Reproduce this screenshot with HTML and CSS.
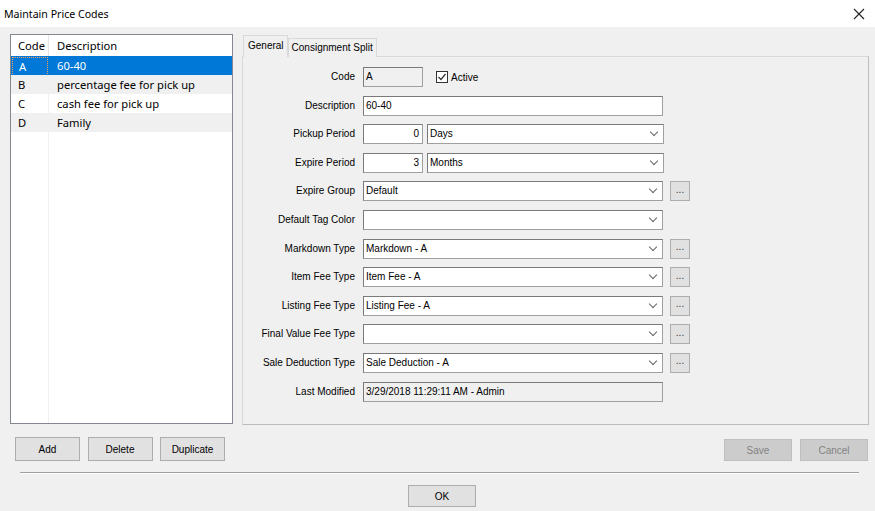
FILE: index.html
```html
<!DOCTYPE html>
<html lang="en">
<head>
  <meta charset="UTF-8" />
  <title>Maintain Price Codes</title>
  <link rel="stylesheet" href="styles.css">
</head>
<body>

<div class="window">
  <div class="titlebar">
    <span class="title">Maintain Price Codes</span>
    <svg class="close" width="12" height="12" viewBox="0 0 12 12">
      <path d="M1 1 L11 11 M11 1 L1 11" stroke="#222" stroke-width="1.1" fill="none" />
    </svg>
  </div>

  <div class="main">
    <div class="left">
      <div class="list">
        <div class="list-row head">
          <span class="c-code">Code</span>
          <span class="c-desc">Description</span>
        </div>
        <div class="list-row selected">
          <span class="c-code"><span class="focus">A</span></span>
          <span class="c-desc">60-40</span>
        </div>
        <div class="list-row alt">
          <span class="c-code">B</span>
          <span class="c-desc">percentage fee for pick up</span>
        </div>
        <div class="list-row">
          <span class="c-code">C</span>
          <span class="c-desc">cash fee for pick up</span>
        </div>
        <div class="list-row alt">
          <span class="c-code">D</span>
          <span class="c-desc">Family</span>
        </div>
        <div class="list-fill">
          <span class="c-code"></span>
          <span class="c-desc"></span>
        </div>
      </div>
      <div class="btn-row">
        <button class="btn">Add</button>
        <button class="btn">Delete</button>
        <button class="btn">Duplicate</button>
      </div>
    </div>

    <div class="right">
      <div class="tabs">
        <div class="tab active">General</div>
        <div class="tab">Consignment Split</div>
      </div>
      <div class="panel">
        <div class="form">
          <label>Code</label>
          <div class="line">
            <div class="field short readonly">A</div>
            <span class="check">
              <svg width="12" height="12" viewBox="0 0 12 12">
                <rect x="0.5" y="0.5" width="11" height="11" fill="#fff" stroke="#333" />
                <path d="M2.5 6 L5 8.5 L9.5 3" stroke="#333" stroke-width="1.2" fill="none" />
              </svg>
              Active
            </span>
          </div>

          <label>Description</label>
          <div class="line"><div class="field wide">60-40</div></div>

          <label>Pickup Period</label>
          <div class="line">
            <div class="field short num">0</div>
            <div class="field select mid">Days<i class="chev"></i></div>
          </div>

          <label>Expire Period</label>
          <div class="line">
            <div class="field short num">3</div>
            <div class="field select mid">Months<i class="chev"></i></div>
          </div>

          <label>Expire Group</label>
          <div class="line">
            <div class="field select wide">Default<i class="chev"></i></div>
            <button class="dots">...</button>
          </div>

          <label>Default Tag Color</label>
          <div class="line"><div class="field select wide"><i class="chev"></i></div></div>

          <label>Markdown Type</label>
          <div class="line">
            <div class="field select wide">Markdown - A<i class="chev"></i></div>
            <button class="dots">...</button>
          </div>

          <label>Item Fee Type</label>
          <div class="line">
            <div class="field select wide">Item Fee - A<i class="chev"></i></div>
            <button class="dots">...</button>
          </div>

          <label>Listing Fee Type</label>
          <div class="line">
            <div class="field select wide">Listing Fee - A<i class="chev"></i></div>
            <button class="dots">...</button>
          </div>

          <label>Final Value Fee Type</label>
          <div class="line">
            <div class="field select wide"><i class="chev"></i></div>
            <button class="dots">...</button>
          </div>

          <label>Sale Deduction Type</label>
          <div class="line">
            <div class="field select wide">Sale Deduction - A<i class="chev"></i></div>
            <button class="dots">...</button>
          </div>

          <label>Last Modified</label>
          <div class="line"><div class="field wide readonly">3/29/2018 11:29:11 AM - Admin</div></div>
        </div>
      </div>
      <div class="btn-row end">
        <button class="btn off">Save</button>
        <button class="btn off">Cancel</button>
      </div>
    </div>
  </div>

  <div class="sep"></div>

  <div class="footer">
    <button class="btn ok">OK</button>
  </div>
</div>

</body>
</html>
```

FILE: styles.css
```css
html, body {
  margin: 0;
  padding: 0;
  background: #f0f0f0;
  font-family: "Liberation Sans", Arial, sans-serif;
  font-size: 10px;
  color: #000;
  overflow: hidden;
}

.window {
  width: 875px;
  height: 511px;
  background: #f0f0f0;
}

.titlebar {
  height: 27px;
  background: #fff;
  display: flex;
  align-items: center;
  justify-content: space-between;
  padding: 0 8px 0 4px;
}

.title {
  font-family: "Noto Sans", "Open Sans", sans-serif;
  font-size: 10.6px;
}

.close {
  margin-right: 2px;
}

.main {
  display: flex;
  padding: 7px 0 0 10px;
}

.left {
  width: 223px;
  display: flex;
  flex-direction: column;
}

.list {
  height: 388px;
  border: 1px solid #828790;
  background: #fff;
  display: flex;
  flex-direction: column;
  font-family: "Noto Sans", "Open Sans", sans-serif;
  font-size: 11.2px;
}

.list-row {
  display: flex;
  height: 19px;
  line-height: 19px;
}

.list-row.head {
  height: 21px;
  line-height: 21px;
}

.list-row.alt {
  background: #f0f0f0;
}

.list-row.selected {
  background: #0078d7;
  color: #fff;
}

.list-fill {
  display: flex;
  flex: 1;
}

.c-code {
  width: 38px;
  padding-left: 7px;
  box-sizing: border-box;
  border-right: 1px solid #f0f0f0;
}

.c-desc {
  flex: 1;
  padding-left: 8px;
}

.list-row.head .c-code {
  border-right-color: #e5e5e5;
}

.list-row.selected .c-code {
  padding-left: 1px;
  border-right-color: #0078d7;
}

.focus {
  display: block;
  height: 17px;
  line-height: 17px;
  margin-top: 1px;
  padding-left: 6px;
  border: 1px dotted #f3a15a;
}

.btn-row {
  display: flex;
  gap: 7.5px;
  padding: 13px 0 0 5px;
}

.btn-row.end {
  justify-content: flex-end;
  gap: 8px;
  padding: 14px 1px 0 0;
}

.btn {
  width: 65px;
  height: 24px;
  background: #e1e1e1;
  border: 1px solid #adadad;
  font-family: "Liberation Sans", Arial, sans-serif;
  font-size: 10px;
  color: #000;
  padding: 0;
}

.btn.off {
  width: 68px;
  height: 22px;
  background: #cccccc;
  border-color: #bfbfbf;
  color: #838383;
}

.right {
  margin-left: 9px;
  width: 627px;
  display: flex;
  flex-direction: column;
}

.tabs {
  display: flex;
  height: 23px;
  align-items: flex-end;
  position: relative;
  z-index: 1;
}

.tab {
  height: 18px;
  line-height: 18px;
  padding: 0 3px;
  border: 1px solid #d9d9d9;
  border-bottom: none;
  background: #f0f0f0;
}

.tab.active {
  height: 21px;
  line-height: 20px;
  margin-left: 1px;
  padding: 0 3px 0 4px;
  border-color: #d9d9d9;
}

.panel {
  height: 367px;
  border: 1px solid #d9d9d9;
  border-right-color: #bcbcbc;
  border-bottom-color: #bcbcbc;
  margin-top: -1px;
}

.form {
  display: grid;
  grid-template-columns: 112px 1fr;
  column-gap: 8px;
  grid-auto-rows: 20px;
  row-gap: 8.6px;
  padding-top: 10px;
}

.form label {
  text-align: right;
  line-height: 20px;
}

.line {
  display: flex;
  align-items: center;
  gap: 4px;
}

.field {
  height: 20px;
  box-sizing: border-box;
  border: 1px solid #7a7a7a;
  border-right-color: #a0a0a0;
  border-bottom-color: #a0a0a0;
  background: #fff;
  line-height: 18px;
  padding: 0 3px 0 2px;
  position: relative;
  white-space: nowrap;
}

.field.readonly {
  background: #f0f0f0;
}

.field.short {
  width: 60px;
}

.field.num {
  text-align: right;
}

.field.mid {
  width: 237px;
}

.field.wide {
  width: 300px;
}

.chev {
  position: absolute;
  right: 6px;
  top: 4px;
  width: 5px;
  height: 5px;
  border-right: 1px solid #666;
  border-bottom: 1px solid #666;
  transform: rotate(45deg);
}

.check {
  display: flex;
  align-items: center;
  gap: 3px;
  margin-left: 9px;
}

.dots {
  width: 20px;
  height: 20px;
  margin-left: 3px;
  padding: 0 0 4px;
  background: #e1e1e1;
  border: 1px solid #adadad;
  font-family: "Liberation Sans", Arial, sans-serif;
  font-size: 10px;
  color: #333;
}

.sep {
  margin: 11px 16px 0 20px;
  height: 1px;
  background: #a0a0a0;
  border-bottom: 1px solid #fff;
}

.footer {
  display: flex;
  justify-content: center;
  padding-top: 11px;
}

.btn.ok {
  width: 68px;
  height: 22px;
  margin-left: 9px;
}
```
